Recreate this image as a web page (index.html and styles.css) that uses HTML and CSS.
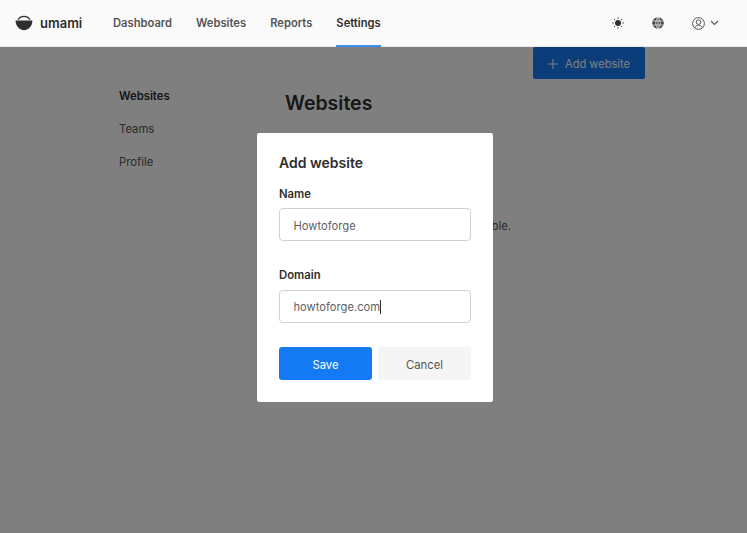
FILE: index.html
```html
<!DOCTYPE html>
<html lang="en">

<head>
    <meta charset="UTF-8">
    <title>umami</title>
    <link rel="stylesheet" href="styles.css">
</head>

<body>
    <header class="topbar">
        <div class="logo">
            <svg class="logo-icon" width="18" height="16" viewBox="0 0 18 16">
                <path d="M3 4.6C4.3 2.6 6.5 1.4 9 1.4s4.7 1.2 6 3.2" fill="none" stroke="#2e2e2e" stroke-width="1.1" />
                <path d="M0.6 5.6h16.8C17.4 11 13.7 15.2 9 15.2S0.6 11 0.6 5.6z" fill="#2e2e2e" />
            </svg>
            <span>umami</span>
        </div>
        <nav class="nav">
            <a>Dashboard</a>
            <a>Websites</a>
            <a>Reports</a>
            <a class="active">Settings</a>
        </nav>
        <div class="tools">
            <svg class="tool-sun" width="12" height="12" viewBox="0 0 12 12">
                <circle cx="6" cy="6" r="3" fill="#2e2e2e" />
                <path d="M6 .3v1.4M6 10.3v1.4M.3 6h1.4M10.3 6h1.4M2 2l1 1M9 9l1 1M2 10l1-1M9 3l1-1" stroke="#2e2e2e" stroke-width="1" fill="none" />
            </svg>
            <svg class="tool-globe" width="12" height="12" viewBox="0 0 12 12">
                <circle cx="6" cy="6" r="5.8" fill="#444" />
                <path d="M.5 4h11M.5 8h11M6 .2v11.6M6 .2C3 3 3 9 6 11.8M6 .2c3 2.8 3 8.8 0 11.6" stroke="#fafafa" stroke-width=".7" fill="none" />
            </svg>
            <div class="profile">
                <svg width="13" height="13" viewBox="0 0 13 13">
                    <circle cx="6.5" cy="6.5" r="5.9" fill="none" stroke="#555" stroke-width="1" />
                    <circle cx="6.5" cy="5.1" r="2.3" fill="none" stroke="#555" stroke-width="1" />
                    <path d="M2.6 10.8c.8-1.7 2.2-2.6 3.9-2.6s3.1.9 3.9 2.6" fill="none" stroke="#555" stroke-width="1" />
                </svg>
                <svg width="9" height="6" viewBox="0 0 9 6">
                    <path d="M1 1l3.5 3.5L8 1" fill="none" stroke="#555" stroke-width="1.1" />
                </svg>
            </div>
        </div>
    </header>

    <main class="page">
        <div class="add-row">
            <button class="add-btn">
                <svg width="10" height="10" viewBox="0 0 10 10">
                    <path d="M5 0v10M0 5h10" stroke="#fff" stroke-width="1" fill="none" />
                </svg>
                Add website
            </button>
        </div>
        <div class="columns">
            <aside class="side">
                <a class="current">Websites</a>
                <a>Teams</a>
                <a>Profile</a>
            </aside>
            <section class="content">
                <h1>Websites</h1>
                <p class="empty">No websites available.</p>
            </section>
        </div>
    </main>

    <div class="overlay">
        <form class="modal">
            <h2>Add website</h2>
            <div class="field">
                <label>Name</label>
                <div class="input">Howtoforge</div>
            </div>
            <div class="field">
                <label>Domain</label>
                <div class="input">howtoforge.com<span class="caret"></span></div>
            </div>
            <div class="actions">
                <button type="button" class="save">Save</button>
                <button type="button" class="cancel">Cancel</button>
            </div>
        </form>
    </div>
</body>

</html>
```

FILE: styles.css
```css
* {
    box-sizing: border-box;
}

body {
    margin: 0;
    height: 533px;
    overflow: hidden;
    background: #fff;
    color: #2e2e2e;
    font-family: Inter, sans-serif;
    font-size: 12px;
}

.topbar {
    position: relative;
    z-index: 2;
    display: flex;
    align-items: center;
    height: 47px;
    padding-left: 15px;
    background: #fafafa;
    border-bottom: 1px solid #e8e8e8;
}

.logo {
    display: flex;
    align-items: center;
    gap: 7px;
    width: 98px;
    font-size: 13px;
    font-weight: 600;
}

.nav {
    display: flex;
    gap: 24px;
    height: 100%;
}

.nav a {
    display: flex;
    align-items: center;
    color: #555;
    font-size: 11.2px;
    font-weight: 600;
    border-bottom: 2px solid transparent;
    margin-bottom: -1px;
}

.nav a.active {
    color: #2e2e2e;
    border-bottom-color: #3b8ff0;
}

.tools {
    display: flex;
    align-items: center;
    margin-left: auto;
    padding-right: 28px;
}

.tool-sun {
    margin-right: 28px;
}

.tool-globe {
    margin-right: 28px;
}

.profile {
    display: flex;
    align-items: center;
    gap: 5px;
}

.page {
    padding: 0 102px 0 119px;
}

.add-row {
    display: flex;
    justify-content: flex-end;
}

.add-btn {
    display: flex;
    align-items: center;
    gap: 7px;
    width: 112px;
    height: 32px;
    padding: 1px 0 0 15px;
    border: none;
    border-radius: 2px;
    background: #147af3;
    color: #fff;
    font-family: inherit;
    font-size: 11.1px;
}

.columns {
    display: flex;
}

.side {
    display: flex;
    flex-direction: column;
    gap: 19px;
    width: 166px;
    padding-top: 10px;
    font-size: 11.3px;
    line-height: 14px;
    color: #555;
}

.side .current {
    color: #2e2e2e;
    font-weight: 600;
}

.content {
    flex: 1;
}

.content h1 {
    margin: 11px 0 0;
    font-size: 19.5px;
    font-weight: 600;
    line-height: 26px;
}

.empty {
    margin: 103px 0 0;
    text-align: right;
    padding-right: 134px;
    white-space: nowrap;
    font-size: 11.3px;
    color: #555;
}

.overlay {
    position: absolute;
    inset: 0;
    z-index: 1;
    display: flex;
    justify-content: center;
    align-items: flex-start;
    padding: 133px 0 0 3px;
    background: rgba(0, 0, 0, .5);
}

.modal {
    width: 236px;
    height: 269px;
    padding: 21px 22px;
    background: #fff;
    border-radius: 2px;
}

.modal h2 {
    margin: 0 0 16px;
    font-size: 14px;
    font-weight: 600;
    line-height: 17px;
}

.field + .field {
    margin-top: 27px;
}

.field label {
    display: block;
    margin-bottom: 7px;
    font-size: 11.3px;
    font-weight: 600;
    line-height: 14px;
}

.field + .field label {
    margin-bottom: 8px;
}

.input {
    display: flex;
    align-items: center;
    height: 33px;
    padding: 2px 0 0 13.5px;
    border: 1px solid #d2d2d2;
    border-radius: 4px;
    font-size: 11.2px;
    color: #5f5f5f;
}

.field + .field .input {
    padding-top: 0;
}

.caret {
    width: 1px;
    height: 14px;
    background: #2e2e2e;
}

.actions {
    display: flex;
    gap: 6px;
    margin-top: 24px;
}

.actions button {
    flex: 1;
    height: 33px;
    padding-top: 3px;
    border: none;
    border-radius: 3px;
    font-family: inherit;
    font-size: 11.3px;
}

.save {
    background: #147af3;
    color: #fff;
}

.cancel {
    background: #f5f5f5;
    color: #555;
}
```
